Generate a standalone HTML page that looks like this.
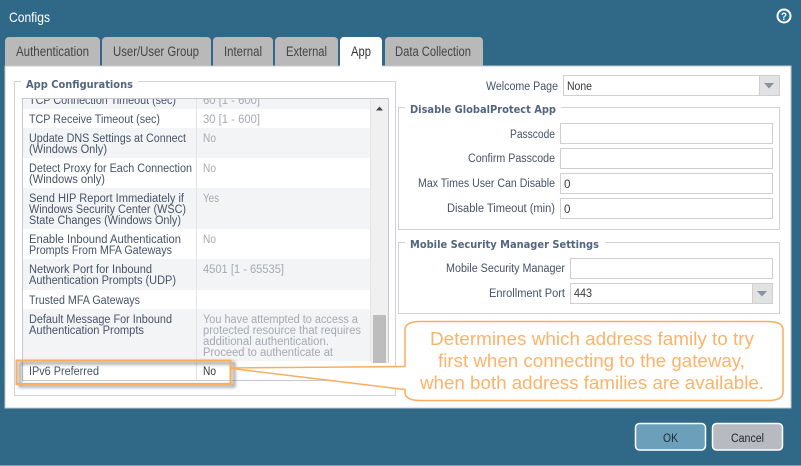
<!DOCTYPE html>
<html><head><meta charset="utf-8"><title>Configs</title>
<style>
html,body{margin:0;padding:0;width:801px;height:466px;overflow:hidden;background:#306888}
svg{display:block}
text{font-family:"Liberation Sans",sans-serif;font-size:11.5px;fill:#465366}
.t{font-size:13.5px;fill:#444}
.v{fill:#a5a9b1}
.b{font-family:"DejaVu Sans",sans-serif;font-weight:bold;font-size:10.5px;fill:#52657e}
.d{fill:#383838}
.c{font-size:18px;fill:#fbb36a}
.g{fill:#f3f4f6}
.i{fill:#fff;stroke:#cfcfcf;stroke-width:1}
.l{fill:none;stroke:#cfd1d5;stroke-width:1}
</style></head>
<body>
<svg width="801" height="466" viewBox="0 0 801 466" xmlns="http://www.w3.org/2000/svg">
<defs><filter id="s" x="-10%" y="-40%" width="120%" height="180%"><feGaussianBlur stdDeviation="1.6"/></filter>
<filter id="f" x="-2%" y="-2%" width="104%" height="104%"><feGaussianBlur stdDeviation="0.35"/></filter></defs>
<rect width="801" height="466" fill="#306888"/>
<rect y="465" width="801" height="1" fill="#7f9fb3"/>
<g filter="url(#f)">
<text x="9" y="22" textLength="41" lengthAdjust="spacingAndGlyphs" style="font-size:14px;fill:#fff">Configs</text>
<circle cx="784" cy="16" r="6.500" fill="#2a6f9e" stroke="#fff" stroke-width="2"/>
<text x="781" y="20" textLength="6" lengthAdjust="spacingAndGlyphs" style="font-size:11px;font-weight:bold;fill:#fff">?</text>

<g fill="#b9b9b9">
<path d="M5 67V41a4 4 0 0 1 4-4h87a4 4 0 0 1 4 4v26z"/>
<path d="M102 67V41a4 4 0 0 1 4-4h101a4 4 0 0 1 4 4v26z"/>
<path d="M213 67V41a4 4 0 0 1 4-4h52a4 4 0 0 1 4 4v26z"/>
<path d="M275 67V41a4 4 0 0 1 4-4h55a4 4 0 0 1 4 4v26z"/>
<path d="M385 67V41a4 4 0 0 1 4-4h90a4 4 0 0 1 4 4v26z"/>
</g>
<rect x="5" y="66" width="786" height="342" fill="#fff" stroke="#c4c8cc"/>
<path d="M340 67V41a4 4 0 0 1 4-4h34a4 4 0 0 1 4 4v26z" fill="#fff"/>
<text class="t" x="16" y="56" textLength="73" lengthAdjust="spacingAndGlyphs">Authentication</text>
<text class="t" x="113" y="56" textLength="86" lengthAdjust="spacingAndGlyphs">User/User Group</text>
<text class="t" x="224" y="56" textLength="38" lengthAdjust="spacingAndGlyphs">Internal</text>
<text class="t" x="286" y="56" textLength="41" lengthAdjust="spacingAndGlyphs">External</text>
<text class="t" x="351" y="56" textLength="20" lengthAdjust="spacingAndGlyphs" style="fill:#333">App</text>
<text class="t" x="395" y="56" textLength="76" lengthAdjust="spacingAndGlyphs">Data Collection</text>

<!-- App Configurations -->
<rect class="l" x="14.500" y="81.500" width="381" height="314"/>

<rect class="g" x="22" y="98" width="349" height="11"/>
<rect x="22" y="109" width="349" height="19" fill="#fff"/>
<rect class="g" x="22" y="128" width="349" height="30"/>
<rect x="22" y="158" width="349" height="30" fill="#fff"/>
<rect class="g" x="22" y="188" width="349" height="41"/>
<rect x="22" y="229" width="349" height="30" fill="#fff"/>
<rect class="g" x="22" y="259" width="349" height="31"/>
<rect x="22" y="290" width="349" height="19" fill="#fff"/>
<rect class="g" x="22" y="309" width="349" height="52"/>
<rect x="371" y="98" width="17" height="265" fill="#f0f0f0"/>
<path d="M196.500 98V380" stroke="#e3e4e7"/>
<path d="M370.500 98V361" stroke="#e3e4e7"/>
<path d="M22.500 380V98.500H388.500V363M22 380.500H389" fill="none" stroke="#c5c8ce"/>
<path d="M376 110.500l3.500-4 3.500 4z" fill="#444"/>
<rect x="373" y="315" width="13" height="48" fill="#bdbdbd"/>

<text x="29" y="104" textLength="147" lengthAdjust="spacingAndGlyphs">TCP Connection Timeout (sec)</text>
<text class="v" x="203" y="104" textLength="57" lengthAdjust="spacingAndGlyphs">60 [1 - 600]</text>
<rect x="15" y="82" width="373" height="16" fill="#fff"/>
<path d="M22 98.500H389" stroke="#c5c8ce"/>
<rect x="21" y="78" width="117" height="11" fill="#fff"/>
<text class="b" x="26" y="88" textLength="107" lengthAdjust="spacingAndGlyphs">App Configurations</text>
<text x="29" y="123" textLength="131" lengthAdjust="spacingAndGlyphs">TCP Receive Timeout (sec)</text>
<text class="v" x="203" y="123" textLength="57" lengthAdjust="spacingAndGlyphs">30 [1 - 600]</text>
<text x="29" y="142" textLength="157" lengthAdjust="spacingAndGlyphs">Update DNS Settings at Connect</text>
<text x="29" y="153" textLength="78" lengthAdjust="spacingAndGlyphs">(Windows Only)</text>
<text class="v" x="203" y="142" textLength="13" lengthAdjust="spacingAndGlyphs">No</text>
<text x="29" y="172" textLength="163" lengthAdjust="spacingAndGlyphs">Detect Proxy for Each Connection</text>
<text x="29" y="183" textLength="76" lengthAdjust="spacingAndGlyphs">(Windows only)</text>
<text class="v" x="203" y="172" textLength="13" lengthAdjust="spacingAndGlyphs">No</text>
<text x="29" y="202" textLength="155" lengthAdjust="spacingAndGlyphs">Send HIP Report Immediately if</text>
<text x="29" y="213" textLength="157" lengthAdjust="spacingAndGlyphs">Windows Security Center (WSC)</text>
<text x="29" y="224" textLength="152" lengthAdjust="spacingAndGlyphs">State Changes (Windows Only)</text>
<text class="v" x="203" y="202" textLength="16" lengthAdjust="spacingAndGlyphs">Yes</text>
<text x="29" y="243" textLength="152" lengthAdjust="spacingAndGlyphs">Enable Inbound Authentication</text>
<text x="29" y="254" textLength="143" lengthAdjust="spacingAndGlyphs">Prompts From MFA Gateways</text>
<text class="v" x="203" y="243" textLength="13" lengthAdjust="spacingAndGlyphs">No</text>
<text x="29" y="273" textLength="123" lengthAdjust="spacingAndGlyphs">Network Port for Inbound</text>
<text x="29" y="284" textLength="147" lengthAdjust="spacingAndGlyphs">Authentication Prompts (UDP)</text>
<text class="v" x="203" y="273" textLength="81" lengthAdjust="spacingAndGlyphs">4501 [1 - 65535]</text>
<text x="29" y="304" textLength="111" lengthAdjust="spacingAndGlyphs">Trusted MFA Gateways</text>
<text x="29" y="323" textLength="143" lengthAdjust="spacingAndGlyphs">Default Message For Inbound</text>
<text x="29" y="334" textLength="115" lengthAdjust="spacingAndGlyphs">Authentication Prompts</text>
<text class="v" x="203" y="323" textLength="155" lengthAdjust="spacingAndGlyphs">You have attempted to access a</text>
<text class="v" x="203" y="334" textLength="158" lengthAdjust="spacingAndGlyphs">protected resource that requires</text>
<text class="v" x="203" y="345" textLength="126" lengthAdjust="spacingAndGlyphs">additional authentication.</text>
<text class="v" x="203" y="356" textLength="130" lengthAdjust="spacingAndGlyphs">Proceed to authenticate at</text>
<text x="29" y="375" textLength="70" lengthAdjust="spacingAndGlyphs">IPv6 Preferred</text>
<text class="d" x="203" y="375" textLength="13" lengthAdjust="spacingAndGlyphs">No</text>

<!-- Right: welcome -->
<text x="486" y="90" textLength="72" lengthAdjust="spacingAndGlyphs">Welcome Page</text>
<rect class="i" x="563.500" y="75.500" width="216" height="20"/>
<rect x="759.500" y="76" width="19.500" height="19" fill="#e2e2e2"/>
<path d="M759.500 75.500V95.500" stroke="#cfcfcf"/>
<path d="M764 83h10l-5 5.500z" fill="#8a929c"/>
<text class="d" x="567" y="90" textLength="25" lengthAdjust="spacingAndGlyphs">None</text>

<!-- Disable GP -->
<rect class="l" x="398.500" y="107.500" width="381" height="122"/>
<rect x="405" y="103" width="156" height="10" fill="#fff"/>
<text class="b" x="410" y="113" textLength="146" lengthAdjust="spacingAndGlyphs">Disable GlobalProtect App</text>
<text x="510" y="138" textLength="45" lengthAdjust="spacingAndGlyphs">Passcode</text>
<rect class="i" x="560.500" y="123.500" width="212" height="20"/>
<text x="468" y="162" textLength="87" lengthAdjust="spacingAndGlyphs">Confirm Passcode</text>
<rect class="i" x="560.500" y="148.500" width="212" height="20"/>
<text x="418" y="187" textLength="137" lengthAdjust="spacingAndGlyphs">Max Times User Can Disable</text>
<rect class="i" x="560.500" y="173.500" width="212" height="20"/>
<text class="d" x="564" y="188" textLength="6.500" lengthAdjust="spacingAndGlyphs">0</text>
<text x="447" y="212" textLength="108" lengthAdjust="spacingAndGlyphs">Disable Timeout (min)</text>
<rect class="i" x="560.500" y="198.500" width="212" height="20"/>
<text class="d" x="564" y="213" textLength="6.500" lengthAdjust="spacingAndGlyphs">0</text>

<!-- MSM -->
<rect class="l" x="398.500" y="242.500" width="381" height="71"/>
<rect x="405" y="238" width="200" height="10" fill="#fff"/>
<text class="b" x="410" y="248" textLength="189" lengthAdjust="spacingAndGlyphs">Mobile Security Manager Settings</text>
<text x="446" y="272" textLength="119" lengthAdjust="spacingAndGlyphs">Mobile Security Manager</text>
<rect class="i" x="570.500" y="258.500" width="202" height="20"/>
<text x="489" y="297" textLength="76" lengthAdjust="spacingAndGlyphs">Enrollment Port</text>
<rect class="i" x="570.500" y="283.500" width="202" height="20"/>
<rect x="752.500" y="284" width="19.500" height="19" fill="#e2e2e2"/>
<path d="M752.500 283.500V303.500" stroke="#cfcfcf"/>
<path d="M757 291h10l-5 5.500z" fill="#8a929c"/>
<text class="d" x="574" y="297" textLength="18" lengthAdjust="spacingAndGlyphs">443</text>
</g>

<!-- Highlight -->
<path d="M20 363H234V386H20z" fill="none" stroke="#555" stroke-width="3" opacity=".55" filter="url(#s)"/>
<rect x="16.500" y="360.500" width="214" height="23.500" fill="none" stroke="#f9ad5e" stroke-width="2"/>

<!-- Callout -->
<path d="M231 368L405 366.500V330Q405 321.500 420 321.500H768Q783 321.500 783 330V392Q783 400.500 768 400.500H420Q405 400.500 405 392V389.500L231 368.500" fill="#fff" stroke="#f9ad5e" stroke-width="1.500" stroke-linejoin="round"/>
<g filter="url(#f)">
<text class="c" x="430" y="345" textLength="324" lengthAdjust="spacingAndGlyphs">Determines which address family to try</text>
<text class="c" x="438" y="367" textLength="307" lengthAdjust="spacingAndGlyphs">first when connecting to the gateway,</text>
<text class="c" x="420" y="389" textLength="344" lengthAdjust="spacingAndGlyphs">when both address families are available.</text>

<!-- Buttons -->
<rect x="635.500" y="423.500" width="70" height="26.500" rx="4" fill="#6c9fb9" stroke="#fff" stroke-width="1.500"/>
<rect x="712.500" y="423.500" width="70" height="26.500" rx="4" fill="#b8bac2" stroke="#fff" stroke-width="1.500"/>
<text x="663" y="442" textLength="15" lengthAdjust="spacingAndGlyphs" style="fill:#1f2b33">OK</text>
<text x="731" y="442" textLength="33" lengthAdjust="spacingAndGlyphs" style="fill:#22262b">Cancel</text>
</g>
</svg>
</body></html>
